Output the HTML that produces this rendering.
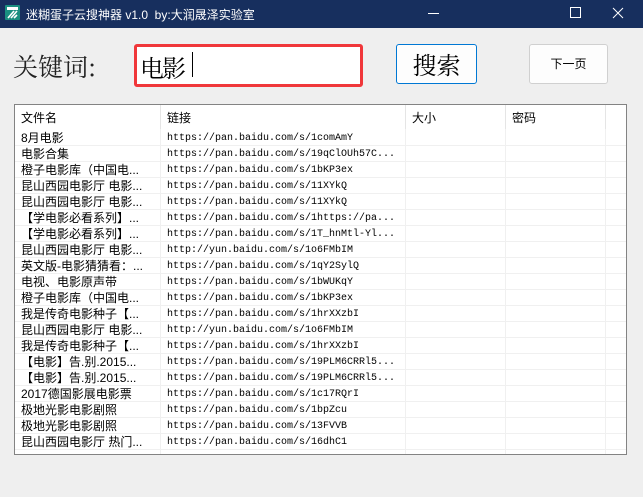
<!DOCTYPE html>
<html><head><meta charset="utf-8"><style>
*{margin:0;padding:0;box-sizing:border-box}
body{width:643px;height:497px;background:#efefef;position:relative;overflow:hidden;font-family:"Liberation Sans","Microsoft YaHei","Noto Sans CJK SC",sans-serif}
.tb{position:absolute;left:0;top:0;width:643px;height:28px;background:#172f5e;color:#fff;font-size:12px}
.abs{position:absolute}
.list{position:absolute;left:14px;top:104px;width:613px;height:351px;border:1px solid #838383;background:#fff;overflow:hidden}
.hd{position:absolute;top:0;height:24px;font-size:12px;color:#000;padding:4px 0 0 6px;border-right:1px solid #e5e5e5}
.row{position:absolute;left:0;width:611px;height:16px;border-bottom:1px solid #f0f0f0}
.c1{position:absolute;left:6px;top:1px;font-size:12px;line-height:14px;white-space:nowrap;color:#000;font-family:"Liberation Sans","Noto Sans CJK SC",sans-serif}
.c2{position:absolute;left:152px;top:2px;font-size:10px;line-height:13px;white-space:nowrap;color:#000;font-family:"Liberation Mono","Noto Sans CJK SC",monospace}
.vl{position:absolute;top:24px;width:1px;height:330px;background:#f0f0f0}
</style></head><body>
<div class="tb">
<svg class="abs" style="left:5px;top:5px" width="15" height="15" viewBox="0 0 15 15"><rect width="15" height="15" rx="1" fill="#1a8f80"/><rect x="2" y="2" width="11" height="3" fill="#fff"/><path d="M3 13 L9 6 M6 13 L12 6 M9 13 L12 10" stroke="#fff" stroke-width="1.6"/></svg>
<div class="abs" style="left:26px;top:6px;font-size:12px">迷糊蛋子云搜神器 v1.0&nbsp;&nbsp;by:大润晟泽实验室</div>
<div class="abs" style="left:428px;top:13px;width:11px;height:1px;background:#fff"></div>
<div class="abs" style="left:570px;top:7px;width:11px;height:11px;border:1px solid #fff"></div>
<svg class="abs" style="left:612px;top:7px" width="12" height="12"><path d="M1 1L11 11M11 1L1 11" stroke="#fff" stroke-width="1"/></svg>
</div>
<div class="abs" style="left:13px;top:48px;font-size:25px;color:#222;font-family:'Noto Serif CJK SC',serif">关键词:</div>
<div class="abs" style="left:134px;top:44px;width:229px;height:43px;border:3px solid #f0373a;border-radius:3px;background:#fff"></div>
<div class="abs" style="left:140px;top:49px;font-size:24px;color:#000;font-family:'Noto Serif CJK SC',serif;letter-spacing:-2px">电影</div>
<div class="abs" style="left:192px;top:52px;width:1px;height:25px;background:#000"></div>
<div class="abs" style="left:396px;top:44px;width:81px;height:40px;border:1px solid #0078d4;border-radius:3px;background:#fdfdfd;font-size:24px;text-align:center;line-height:38px;font-family:'Noto Serif CJK SC',serif">搜索</div>
<div class="abs" style="left:529px;top:44px;width:79px;height:40px;border:1px solid #d0d0d0;border-radius:3px;background:#fdfdfd;font-size:12px;text-align:center;line-height:38px">下一页</div>
<div class="list">
<div class="hd" style="left:0;width:146px">文件名</div>
<div class="hd" style="left:146px;width:245px">链接</div>
<div class="hd" style="left:391px;width:100px">大小</div>
<div class="hd" style="left:491px;width:100px">密码</div>
<div class="vl" style="left:145px"></div><div class="vl" style="left:390px"></div><div class="vl" style="left:490px"></div><div class="vl" style="left:590px"></div>
<div class="row" style="top:25px"><span class="c1">8月电影</span><span class="c2">https://pan.baidu.com/s/1comAmY</span></div>
<div class="row" style="top:41px"><span class="c1">电影合集</span><span class="c2">https://pan.baidu.com/s/19qClOUh57C...</span></div>
<div class="row" style="top:57px"><span class="c1">橙子电影库（中国电...</span><span class="c2">https://pan.baidu.com/s/1bKP3ex</span></div>
<div class="row" style="top:73px"><span class="c1">昆山西园电影厅 电影...</span><span class="c2">https://pan.baidu.com/s/11XYkQ</span></div>
<div class="row" style="top:89px"><span class="c1">昆山西园电影厅 电影...</span><span class="c2">https://pan.baidu.com/s/11XYkQ</span></div>
<div class="row" style="top:105px"><span class="c1">【学电影必看系列】...</span><span class="c2">https://pan.baidu.com/s/1https://pa...</span></div>
<div class="row" style="top:121px"><span class="c1">【学电影必看系列】...</span><span class="c2">https://pan.baidu.com/s/1T_hnMtl-Yl...</span></div>
<div class="row" style="top:137px"><span class="c1">昆山西园电影厅 电影...</span><span class="c2">http://yun.baidu.com/s/1o6FMbIM</span></div>
<div class="row" style="top:153px"><span class="c1">英文版-电影猜猜看：...</span><span class="c2">https://pan.baidu.com/s/1qY2SylQ</span></div>
<div class="row" style="top:169px"><span class="c1">电视、电影原声带</span><span class="c2">https://pan.baidu.com/s/1bWUKqY</span></div>
<div class="row" style="top:185px"><span class="c1">橙子电影库（中国电...</span><span class="c2">https://pan.baidu.com/s/1bKP3ex</span></div>
<div class="row" style="top:201px"><span class="c1">我是传奇电影种子【...</span><span class="c2">https://pan.baidu.com/s/1hrXXzbI</span></div>
<div class="row" style="top:217px"><span class="c1">昆山西园电影厅 电影...</span><span class="c2">http://yun.baidu.com/s/1o6FMbIM</span></div>
<div class="row" style="top:233px"><span class="c1">我是传奇电影种子【...</span><span class="c2">https://pan.baidu.com/s/1hrXXzbI</span></div>
<div class="row" style="top:249px"><span class="c1">【电影】告.别.2015...</span><span class="c2">https://pan.baidu.com/s/19PLM6CRRl5...</span></div>
<div class="row" style="top:265px"><span class="c1">【电影】告.别.2015...</span><span class="c2">https://pan.baidu.com/s/19PLM6CRRl5...</span></div>
<div class="row" style="top:281px"><span class="c1">2017德国影展电影票</span><span class="c2">https://pan.baidu.com/s/1c17RQrI</span></div>
<div class="row" style="top:297px"><span class="c1">极地光影电影剧照</span><span class="c2">https://pan.baidu.com/s/1bpZcu</span></div>
<div class="row" style="top:313px"><span class="c1">极地光影电影剧照</span><span class="c2">https://pan.baidu.com/s/13FVVB</span></div>
<div class="row" style="top:329px"><span class="c1">昆山西园电影厅 热门...</span><span class="c2">https://pan.baidu.com/s/16dhC1</span></div>
</div>
</body></html>
